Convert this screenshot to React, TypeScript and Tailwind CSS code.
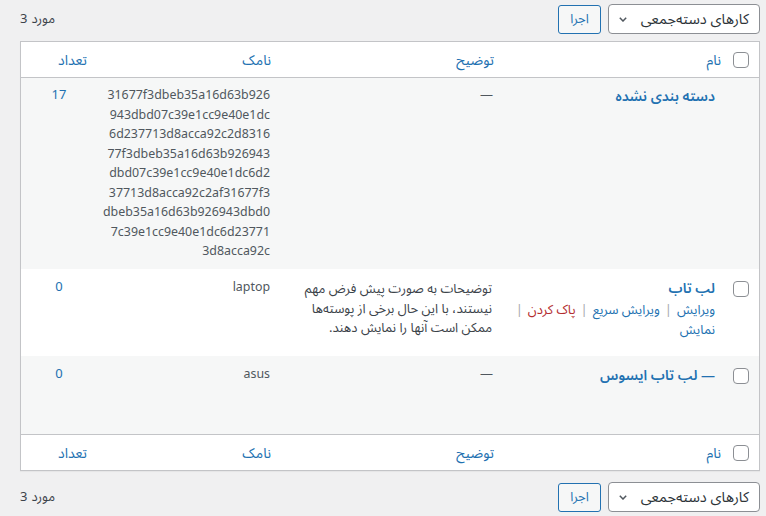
import React from "react";

const slugLines = [
  "31677f3dbeb35a16d63b926",
  "943dbd07c39e1cc9e40e1dc",
  "6d237713d8acca92c2d8316",
  "77f3dbeb35a16d63b926943",
  "dbd07c39e1cc9e40e1dc6d2",
  "37713d8acca92c2af31677f3",
  "dbeb35a16d63b926943dbd0",
  "7c39e1cc9e40e1dc6d23771",
  "3d8acca92c",
];

const Checkbox = () => (
  <span className="block w-[16px] h-[16px] rounded-[4px] border border-[#8c8f94] bg-white" />
);

const Toolbar = ({ className }: { className: string }) => (
  <div className={`flex items-center h-[30px] ${className}`}>
    <div className="flex items-center justify-between w-[152px] h-[30px] bg-white border border-[#8c8f94] rounded-[4px] pr-[10px] pl-[10px] text-[14.5px] text-[#2c3338]">
      <span>کارهای دسته‌جمعی</span>
      <svg width="8" height="5" viewBox="0 0 8 5" fill="none">
        <path d="M0.8 0.8l3.2 3.2 3.2-3.2" stroke="#50575e" strokeWidth="1.5" />
      </svg>
    </div>
    <button className="mr-[7px] w-[43px] h-[29px] bg-[#f6f7f7] border border-[#2271b1] rounded-[3px] text-[13px] text-[#2271b1]">
      اجرا
    </button>
    {/* count: number sits on the left */}
    <div dir="ltr" className="mr-auto flex items-center gap-[4px] text-[13px] text-[#3c434a]">
      <span>3</span>
      <span>مورد</span>
    </div>
  </div>
);

const HeadRow = ({ className }: { className: string }) => (
  <div
    className={`grid grid-cols-[31px_225px_223px_183px_76px] items-center h-[36px] text-[14px] text-[#2271b1] ${className}`}
  >
    <div className="pr-[10px] pt-[1px]">
      <Checkbox />
    </div>
    <div className="pr-[7px]">نام</div>
    <div className="pr-[9px]">توضیح</div>
    <div className="pr-[9px]">نامک</div>
    <div className="pr-[10px]">تعداد</div>
  </div>
);

const Separator = () => <span className="text-[#a7aaad] px-[5px]">|</span>;

export default function App() {
  return (
    <div
      dir="rtl"
      className="min-h-[516px] bg-[#f0f0f1] pl-[20px] pr-[6px] pt-[4px] font-['Noto_Sans','Noto_Sans_Arabic','DejaVu_Sans',sans-serif]"
    >
      <Toolbar className="mb-[7px]" />

      <div className="bg-white border border-[#c3c4c7] shadow-[0_1px_1px_rgba(0,0,0,0.04)]">
        <HeadRow className="border-b border-[#c3c4c7]" />

        <div className="grid grid-cols-[31px_225px_223px_183px_76px] h-[191px] bg-[#f6f7f7] text-[13px] leading-[19.5px] text-[#50575e]">
          <div />
          <div className="pr-[13px] pt-[8px] text-[14px] leading-[20px] font-semibold text-[#2271b1]">
            دسته بندی نشده
          </div>
          <div className="pr-[10px] pt-[7px]">—</div>
          <div className="pr-[10px] pt-[7px] text-[12.4px]">
            {slugLines.map((line) => (
              <div key={line}>{line}</div>
            ))}
          </div>
          <div className="pt-[7px] text-center text-[#2271b1]">17</div>
        </div>

        <div className="grid grid-cols-[31px_225px_223px_183px_76px] h-[87px] bg-white text-[13px] leading-[19.5px] text-[#50575e]">
          <div className="pr-[10px] pt-[12px]">
            <Checkbox />
          </div>
          <div className="pr-[13px] pt-[9px]">
            <div className="text-[14px] leading-[20px] font-semibold text-[#2271b1]">لب تاب</div>
            <div className="mt-[2px] text-[#2271b1]">
              <span>ویرایش</span>
              <Separator />
              <span>ویرایش سریع</span>
              <Separator />
              <span className="text-[#b32d2e]">پاک کردن</span>
              <Separator />
            </div>
            <div className="text-[#2271b1]">نمایش</div>
          </div>
          <div className="pr-[11px] pt-[10px] text-[#3c434a]">
            <div>توضیحات به صورت پیش فرض مهم</div>
            <div>نیستند، با این حال برخی از پوسته‌ها</div>
            <div>ممکن است آنها را نمایش دهند.</div>
          </div>
          <div className="pr-[10px] pt-[8px] text-[12.4px]">laptop</div>
          <div className="pt-[8px] text-center text-[#2271b1]">0</div>
        </div>

        <div className="grid grid-cols-[31px_225px_223px_183px_76px] h-[78px] bg-[#f6f7f7] text-[13px] leading-[19.5px] text-[#50575e]">
          <div className="pr-[10px] pt-[12px]">
            <Checkbox />
          </div>
          <div className="pr-[13px] pt-[9px] text-[14px] leading-[20px] font-semibold text-[#2271b1]">
            — لب تاب ایسوس
          </div>
          <div className="pr-[10px] pt-[8px]">—</div>
          <div className="pr-[10px] pt-[8px] text-[12.4px]">asus</div>
          <div className="pt-[8px] text-center text-[#2271b1]">0</div>
        </div>

        <HeadRow className="border-t border-[#c3c4c7] h-[35px]" />
      </div>

      <Toolbar className="mt-[11px]" />
    </div>
  );
}
